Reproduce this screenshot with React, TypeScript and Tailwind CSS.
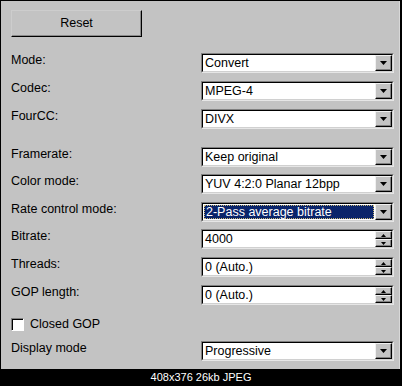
import React from "react";

const font = { fontFamily: '"Liberation Sans", Arial, sans-serif' };

function Tri({ up, small }: { up?: boolean; small?: boolean }) {
  const w = small ? 5 : 7;
  const h = small ? 3 : 4;
  return (
    <svg width={w} height={h} viewBox={`0 0 ${w} ${h}`}>
      <polygon
        points={up ? `0,${h} ${w},${h} ${w / 2},0` : `0,0 ${w},0 ${w / 2},${h}`}
        fill="#000"
      />
    </svg>
  );
}

function Btn({ children, className }: { children: React.ReactNode; className: string }) {
  return (
    <div
      className={`flex items-center justify-center bg-[#c3c3c3] border border-t-[#f0f0f0] border-l-[#f0f0f0] border-r-black border-b-black shadow-[inset_-1px_-1px_0_#808080] ${className}`}
    >
      {children}
    </div>
  );
}

function Field({
  value,
  spin,
  selected,
}: {
  value: string;
  spin?: boolean;
  selected?: boolean;
}) {
  return (
    <div className="w-[193px] h-[20px] flex border border-t-[#808080] border-l-[#808080] border-r-[#e6e6e6] border-b-[#e6e6e6]">
      <div className="flex-1 flex border border-t-black border-l-black border-r-[#d0d0d0] border-b-[#d0d0d0] bg-white">
        <div className="flex-1 flex p-[1px]">
          <div
            className={
              selected
                ? "flex-1 flex items-center pl-[1px] bg-[#0a246a] text-white text-[12.5px] leading-none border border-dotted border-[#c8b878]"
                : "flex-1 flex items-center pl-[1px] text-black text-[12.5px] leading-none"
            }
          >
            {value}
          </div>
        </div>
        {spin ? (
          <div className="w-[17px] flex flex-col">
            <Btn className="h-[8px]">
              <Tri up small />
            </Btn>
            <Btn className="h-[8px]">
              <Tri small />
            </Btn>
          </div>
        ) : (
          <Btn className="w-[17px]">
            <Tri />
          </Btn>
        )}
      </div>
    </div>
  );
}

function Row({
  label,
  value,
  mt,
  spin,
  selected,
}: {
  label: string;
  value: string;
  mt: string;
  spin?: boolean;
  selected?: boolean;
}) {
  return (
    <div className={`flex items-center ${mt}`}>
      <div className="w-[190px] pb-[6px] text-[12.5px] leading-[14px] text-black">{label}</div>
      <Field value={value} spin={spin} selected={selected} />
    </div>
  );
}

export default function App() {
  return (
    <div className="w-[402px] h-[386px] bg-black flex flex-col overflow-hidden" style={font}>
      <div className="ml-[1px] mt-[1px] w-[399px] h-[368px] bg-[#c3c3c3] pl-[10px] flex flex-col border-r border-r-[#d8d8d8]">
        <div className="mt-[9px] w-[131px] h-[27px] flex items-center justify-center text-[12.5px] text-black border border-t-[#cdcdcd] border-l-[#cdcdcd] border-r-black border-b-black shadow-[inset_-1px_-1px_0_#8a8a8a]">
          Reset
        </div>

        <Row label="Mode:" value="Convert" mt="mt-[16px]" />
        <Row label="Codec:" value="MPEG-4" mt="mt-[8px]" />
        <Row label="FourCC:" value="DIVX" mt="mt-[8px]" />

        <Row label="Framerate:" value="Keep original" mt="mt-[18px]" />
        <Row label="Color mode:" value="YUV 4:2:0 Planar 12bpp" mt="mt-[7px]" />
        <Row label="Rate control mode:" value="2-Pass average bitrate" mt="mt-[8px]" selected />
        <Row label="Bitrate:" value="4000" mt="mt-[7px]" spin />
        <Row label="Threads:" value="0 (Auto.)" mt="mt-[8px]" spin />
        <Row label="GOP length:" value="0 (Auto.)" mt="mt-[8px]" spin />

        <div className="mt-[12px] flex items-center gap-[6px]">
          <div className="w-[13px] h-[13px] bg-white border border-t-[#808080] border-l-[#808080] border-r-white border-b-white shadow-[inset_1px_1px_0_#000]" />
          <span className="text-[12.5px] leading-[14px] text-black">Closed GOP</span>
        </div>

        <Row label="Display mode" value="Progressive" mt="mt-[10px]" />
      </div>
      <div className="flex-1 flex items-center justify-center text-white text-[11px] leading-none">
        408x376 26kb JPEG
      </div>
    </div>
  );
}
